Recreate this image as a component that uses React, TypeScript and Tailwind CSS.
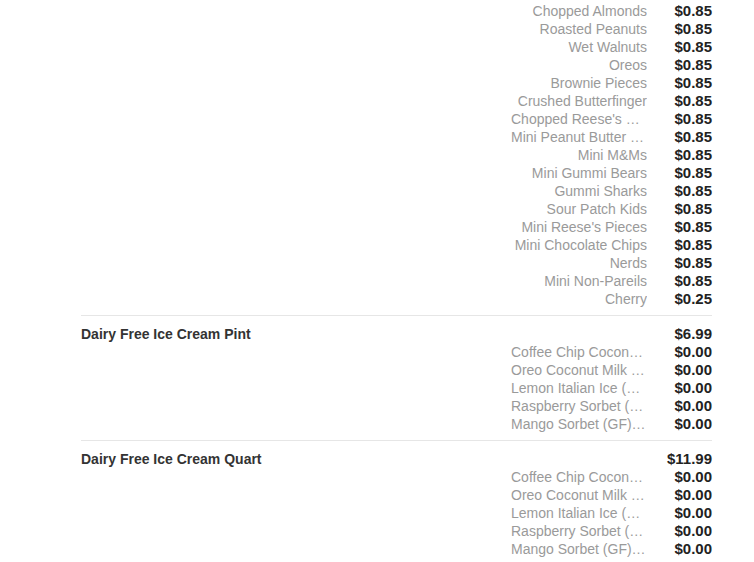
import React from "react";

type Opt = [string, string];

const toppings: Opt[] = [
  ["Chopped Almonds", "$0.85"],
  ["Roasted Peanuts", "$0.85"],
  ["Wet Walnuts", "$0.85"],
  ["Oreos", "$0.85"],
  ["Brownie Pieces", "$0.85"],
  ["Crushed Butterfinger", "$0.85"],
  ["Chopped Reese's Peanut Butter Cups", "$0.85"],
  ["Mini Peanut Butter Cups", "$0.85"],
  ["Mini M&Ms", "$0.85"],
  ["Mini Gummi Bears", "$0.85"],
  ["Gummi Sharks", "$0.85"],
  ["Sour Patch Kids", "$0.85"],
  ["Mini Reese's Pieces", "$0.85"],
  ["Mini Chocolate Chips", "$0.85"],
  ["Nerds", "$0.85"],
  ["Mini Non-Pareils", "$0.85"],
  ["Cherry", "$0.25"],
];

const flavors: Opt[] = [
  ["Coffee Chip Coconut Milk (GF)", "$0.00"],
  ["Oreo Coconut Milk (V)", "$0.00"],
  ["Lemon Italian Ice (GF)", "$0.00"],
  ["Raspberry Sorbet (GF)", "$0.00"],
  ["Mango Sorbet (GF) (V)", "$0.00"],
];

function Options({ items }: { items: Opt[] }) {
  return (
    <div className="flex flex-col items-end">
      {items.map(([n, p], i) => (
        <div key={i} className="flex h-[18px] items-center">
          <div className="w-[136px] truncate text-right text-[14px] leading-[18px] text-[#9a9a9a]">{n}</div>
          <div className="w-[65px] text-right text-[15px] font-bold leading-[18px] text-[#222]">{p}</div>
        </div>
      ))}
    </div>
  );
}

function Item({ title, price, items }: { title: string; price: string; items: Opt[] }) {
  return (
    <div className="border-t border-[#e6e6e6] pt-[9px] pb-[7px]">
      <div className="flex h-[18px] items-center justify-between">
        <div className="text-[14px] font-bold text-[#333]">{title}</div>
        <div className="text-[15px] font-bold text-[#222]">{price}</div>
      </div>
      <Options items={items} />
    </div>
  );
}

export default function App() {
  return (
    <div
      className="h-[562px] w-[754px] overflow-hidden bg-white pl-[81px] pr-[42px] pt-[2px]"
      style={{ fontFamily: '"Liberation Sans", Arial, sans-serif' }}
    >
      <div className="pb-[7px]">
        <Options items={toppings} />
      </div>
      <Item title="Dairy Free Ice Cream Pint" price="$6.99" items={flavors} />
      <Item title="Dairy Free Ice Cream Quart" price="$11.99" items={flavors} />
    </div>
  );
}
